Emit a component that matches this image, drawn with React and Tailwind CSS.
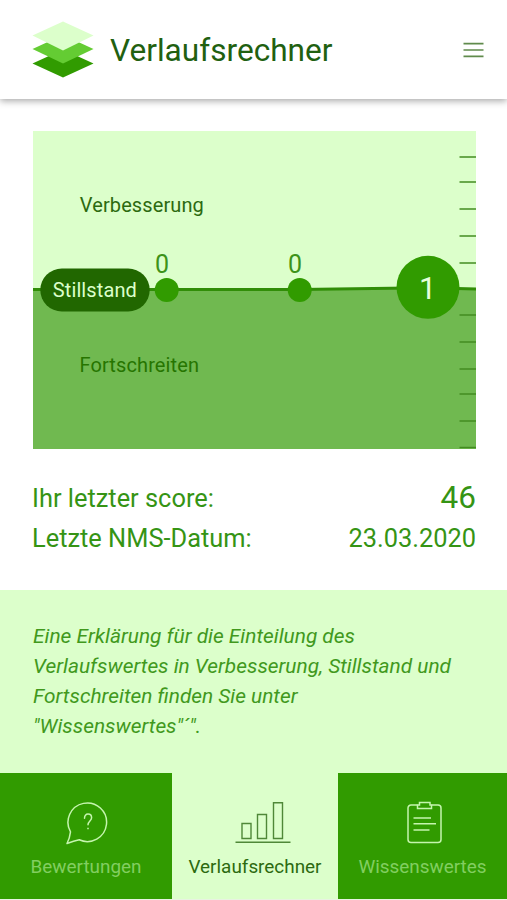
/**
 * Progress screen: trend chart, last score summary, hint and tab bar.
 */

const SCALE_TICKS = [26, 51, 78, 105, 132, 184, 211, 238, 263, 290, 316.5];

const NAV_ITEMS = [
  { label: 'Bewertungen', icon: QuestionBubble },
  { label: 'Verlaufsrechner', icon: BarsIcon, active: true },
  { label: 'Wissenswertes', icon: ClipboardIcon },
];

function Logo() {
  return (
    <svg className="h-[58px] w-[62px] shrink-0" viewBox="0 0 62 58">
      <path d="M0.500 42.500 31 28.500 61.500 42.500 31 56.500Z" fill="#319b00" />
      <path d="M0.500 28 31 14 61.500 28 31 42.500Z" fill="#64cc33" />
      <path d="M0.500 14.500 31 0.500 61.500 14.500 31 29.500Z" fill="#dcffcb" />
    </svg>
  );
}

function QuestionBubble() {
  return (
    <svg className="ml-[2px] h-[44px] w-[44px]" viewBox="0 0 44 44" fill="none" stroke="#c5f5ae" strokeWidth="1.500" strokeLinejoin="round">
      <path d="M5.500 30.800 A19.300 19.300 0 1 1 14.200 38.800 Q9 39.800 2 42.500 Q4.800 36.800 5.500 30.800Z" />
      <path d="M19.500 17.300c0-2.700 1.400-4.200 3.500-4.200s3.600 1.500 3.600 3.700c0 3-3.600 3.500-3.600 7" strokeLinecap="round" />
      <path d="M23 26.800v1.400" />
    </svg>
  );
}

function BarsIcon() {
  return (
    <svg className="ml-[16px] h-[44px] w-[56px]" viewBox="0 0 56 44" fill="none" stroke="#4f8838" strokeWidth="1.400">
      <path d="M7 22.500h9v15H7zM22.500 13.500h9v24h-9zM38.500 1.800h9v35.700h-9z" />
      <path d="M0.500 41.300h55" />
    </svg>
  );
}

function ClipboardIcon() {
  return (
    <svg className="ml-[5px] h-[44px] w-[36px]" viewBox="0 0 36 44" fill="none" stroke="#c5f5ae" strokeWidth="1.500">
      <path d="M10.500 4H4a3 3 0 0 0-3 3v31.500a3 3 0 0 0 3 3h27a3 3 0 0 0 3-3V7a3 3 0 0 0-3-3h-6.500" />
      <path d="M10.500 4v3.500h14V4H23V1.500H12.500V4Z" />
      <path d="M6.500 17h17.500M6.500 22.800h22.500M6.500 29h16" />
    </svg>
  );
}

function TrendChart() {
  return (
    <svg className="h-[318px] w-[443px] shrink-0" viewBox="0 0 443 318">
      <rect width="443" height="318" fill="#dcffcb" />
      <rect y="158" width="443" height="160" fill="#70b950" />
      <g stroke="#438c20" strokeWidth="1.500">
        {SCALE_TICKS.map((y) => (
          <path key={y} d={`M426.500 ${y}H443`} />
        ))}
      </g>
      <path d="M0 158.500H267L395 156.800L443 158" fill="none" stroke="#318d08" strokeWidth="3" />

      <text x="46.800" y="80.500" fontSize="20" textLength="124" fill="#2c6a10">Verbesserung</text>
      <text x="46.500" y="240.500" fontSize="20" textLength="119.500" fill="#267500">Fortschreiten</text>

      {/* Standstill marker */}
      <rect x="7.300" y="137.500" width="109.400" height="43" rx="21.500" fill="#216700" />
      <text x="19.800" y="166" fontSize="20" textLength="84" fill="#dcffcb">Stillstand</text>

      {/* Readings */}
      <text x="122" y="142.300" fontSize="25" fill="#3d9319">0</text>
      <circle cx="133.700" cy="159" r="12" fill="#319b00" />
      <text x="255" y="142.300" fontSize="25" fill="#3d9319">0</text>
      <circle cx="266.700" cy="159" r="12" fill="#319b00" />
      <circle cx="395" cy="156.300" r="31.500" fill="#319b00" />
      <text x="386" y="167.500" fontSize="31" fill="#e6ffda">1</text>
    </svg>
  );
}

function NavItem({ label, icon: Icon, active }) {
  return (
    <button
      className={`flex flex-col items-center pt-[28px] text-[18.900px] leading-[24px] ${
        active ? 'bg-[#dcffcb] text-[#2c6a10]' : 'bg-[#319b00] text-[#82ce60]'
      }`}
    >
      <Icon />
      <span className="mt-[10px] whitespace-nowrap">{label}</span>
    </button>
  );
}

export default function App() {
  return (
    <div className="flex h-[900px] w-[507px] flex-col overflow-hidden bg-white font-['Roboto',sans-serif]">
      <header className="flex h-[99px] shrink-0 items-center gap-[16px] pr-[23px] pl-[32px] shadow-[0_2px_7px_rgba(0,0,0,0.35)]">
        <Logo />
        <h1 className="flex-1 pt-[2px] text-[31.600px] leading-[40px] text-[#216010]">Verlaufsrechner</h1>
        <button aria-label="Menü">
          <svg className="h-[16px] w-[21px]" viewBox="0 0 21 16" stroke="#608b4c" strokeWidth="1.700">
            <path d="M0.500 1.700h20M0.500 8h20M0.500 14.400h20" />
          </svg>
        </button>
      </header>

      <main className="flex flex-1 flex-col">
        <section className="pt-[32px] pl-[32.500px]">
          <TrendChart />
        </section>

        <dl className="flex h-[141px] flex-col pt-[29px] pr-[31px] pl-[32px] text-[25.400px] leading-[40px] text-[#359414]">
          <div className="flex h-[40px] items-center justify-between">
            <dt>Ihr letzter score:</dt>
            <dd className="pb-[1px] text-[31.500px]">46</dd>
          </div>
          <div className="flex h-[40px] items-center justify-between">
            <dt>Letzte NMS-Datum:</dt>
            <dd>23.03.2020</dd>
          </div>
        </dl>

        <p className="flex-1 bg-[#dcffcb] pt-[31px] pl-[33px] text-[20.850px] leading-[30px] text-[#41991d] italic">
          Eine Erklärung für die Einteilung des
          <br />
          Verlaufswertes in Verbesserung, Stillstand und
          <br />
          Fortschreiten finden Sie unter
          <br />
          "Wissenswertes"´".
        </p>
      </main>

      <nav className="grid h-[127px] shrink-0 grid-cols-[172px_166px_169px] border-b border-[#e8f3e2] bg-[#dcffcb]">
        {NAV_ITEMS.map((item) => (
          <NavItem key={item.label} {...item} />
        ))}
      </nav>
    </div>
  );
}
